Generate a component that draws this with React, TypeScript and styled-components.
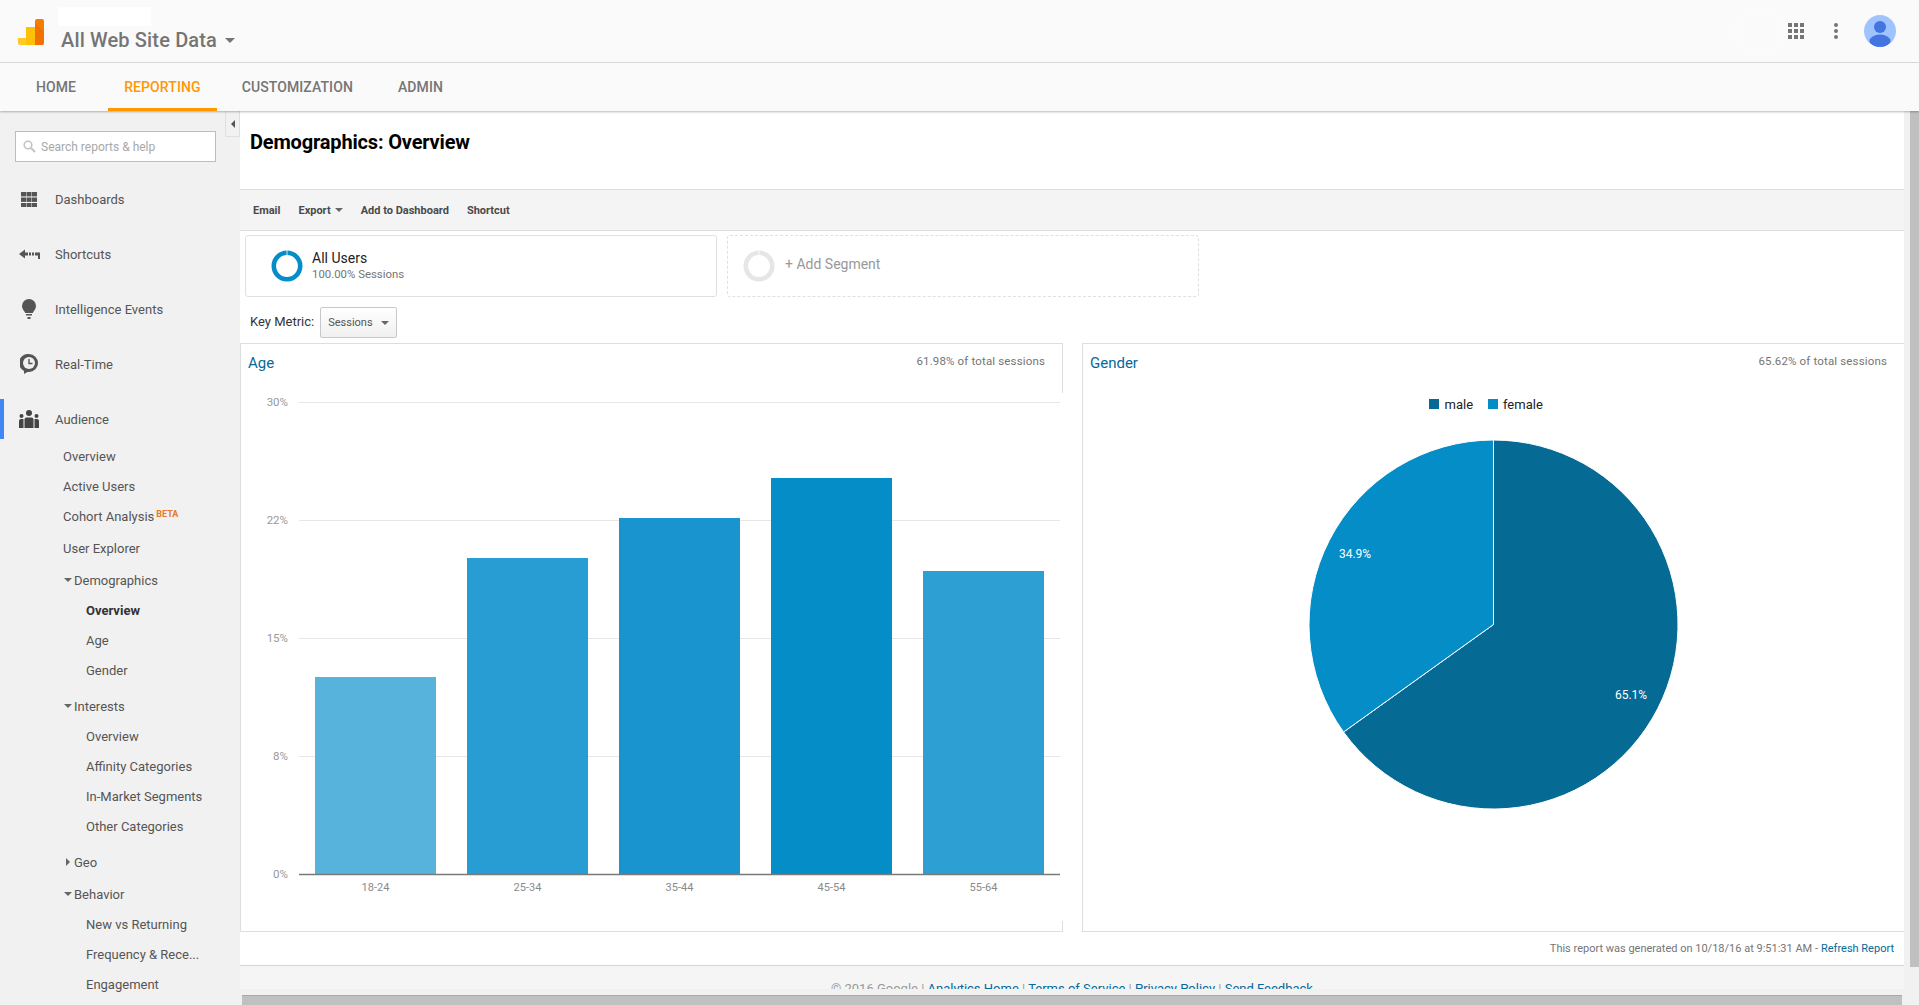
import React from 'react'
import styled, { createGlobalStyle } from 'styled-components'

const GlobalStyle = createGlobalStyle`
  html, body {
    margin: 0;
    padding: 0;
    height: 100%;
    overflow: hidden;
    background: #f1f1f1;
    font-family: Roboto, "Noto Sans", sans-serif;
  }
  * { box-sizing: border-box; }
`

const Page = styled.div`
  width: 1919px;
  height: 1005px;
  display: flex;
  flex-direction: column;
  overflow: hidden;
`

const TopBar = styled.header`
  height: 63px;
  flex: none;
  display: flex;
  align-items: flex-start;
  background: #fafafa;
  border-bottom: 1px solid #dcdcdc;
`

const LogoBox = styled.div`
  width: 58px;
  padding: 19px 0 0 18px;
  flex: none;
`

const ViewBlock = styled.div`
  display: flex;
  flex-direction: column;
  padding-top: 7px;
  flex: 1;
`

const Blank = styled.div`
  width: 93px;
  height: 19px;
  background: #fff;
`

const ViewName = styled.div`
  display: flex;
  align-items: center;
  gap: 8px;
  height: 28px;
  margin-left: 3px;
  font-size: 20px;
  font-weight: 500;
  letter-spacing: 0.15px;
  color: #757575;
`

const Caret = styled.span<{ $color?: string; $size?: number }>`
  display: inline-block;
  width: 0;
  height: 0;
  border-left: ${p => p.$size ?? 4}px solid transparent;
  border-right: ${p => p.$size ?? 4}px solid transparent;
  border-top: ${p => p.$size ?? 4}px solid ${p => p.$color ?? '#757575'};
`

const BigCaret = styled(Caret)`
  margin-top: 1px;
`

const TopIcons = styled.div`
  display: flex;
  align-items: center;
  height: 62px;
  padding-right: 23px;
`

const GhostCircle = styled.div`
  width: 50px;
  height: 44px;
  margin-right: 3px;
  border: 1px solid #fcfcfc;
  border-radius: 50%;
`

const IconSlot = styled.div<{ $gap: number }>`
  display: flex;
  margin-right: ${p => p.$gap}px;
`

const TopNav = styled.nav`
  height: 48px;
  flex: none;
  display: flex;
  background: #fafafa;
  box-shadow: 0 1px 2px rgba(0, 0, 0, 0.28);
  position: relative;
  z-index: 2;
`

const NavItem = styled.div<{ $active?: boolean; $ml: number }>`
  margin-left: ${p => p.$ml}px;
  padding: 2px 16px 0;
  display: flex;
  align-items: center;
  font-size: 14px;
  font-weight: 500;
  letter-spacing: 0.1px;
  color: ${p => (p.$active ? '#ff9800' : '#757575')};
  border-bottom: 3px solid ${p => (p.$active ? '#ff9800' : 'transparent')};
`

const Body = styled.div`
  flex: 1;
  display: flex;
  min-height: 0;
`

const Sidebar = styled.aside`
  width: 240px;
  flex: none;
  background: #f1f1f1;
  position: relative;
  overflow: hidden;
`

const Collapse = styled.div`
  position: absolute;
  top: 0;
  right: 0;
  width: 15px;
  height: 26px;
  display: flex;
  align-items: center;
  justify-content: center;
  background: #f1f1f1;
  border: 1px solid #e0e0e0;
  border-top: none;
`

const LeftTriangle = styled.span`
  width: 0;
  height: 0;
  border-top: 4px solid transparent;
  border-bottom: 4px solid transparent;
  border-right: 4px solid #555;
`

const SearchBox = styled.div`
  width: 201px;
  height: 31px;
  margin: 20px 0 17px 15px;
  display: flex;
  align-items: center;
  gap: 5px;
  padding-left: 7px;
  background: #fff;
  border: 1px solid #bdbdbd;
  font-size: 12px;
  color: #a8a8a8;
`

const MainRow = styled.div<{ $active?: boolean }>`
  height: 40px;
  margin-bottom: 15px;
  display: flex;
  align-items: center;
  border-left: 4px solid ${p => (p.$active ? '#4285f4' : 'transparent')};
  font-size: 13px;
  color: #555;
  &:last-of-type {
    margin-bottom: 2px;
  }
`

const MainIcon = styled.span`
  width: 51px;
  flex: none;
  display: flex;
  justify-content: center;
  padding-right: 1px;
`

const SubRow = styled.div<{ $level: number; $bold?: boolean; $top?: number }>`
  height: 30px;
  margin-top: ${p => p.$top ?? 0}px;
  display: flex;
  align-items: center;
  padding-left: ${p => (p.$level === 1 ? 63 : p.$level === 2 ? 86 : 64)}px;
  font-size: 13px;
  font-weight: ${p => (p.$bold ? 700 : 400)};
  color: ${p => (p.$bold ? '#333' : '#555')};
  white-space: nowrap;
`

const Twisty = styled.span`
  width: 10px;
  flex: none;
  display: flex;
`

const RightTriangle = styled.span`
  width: 0;
  height: 0;
  margin-left: 2px;
  border-top: 4px solid transparent;
  border-bottom: 4px solid transparent;
  border-left: 4px solid #666;
`

const Beta = styled.span`
  font-size: 9px;
  font-weight: 700;
  color: #e8762d;
  margin: 0 0 3px 2px;
  line-height: 1;
`

const ContentColumn = styled.div`
  width: 1664px;
  flex: none;
  display: flex;
  flex-direction: column;
  min-height: 0;
`

const Report = styled.main`
  flex: 1;
  min-height: 0;
  background: #fff;
  display: flex;
  flex-direction: column;
  overflow: hidden;
`

const TitleBar = styled.div`
  height: 79px;
  flex: none;
  padding: 18px 0 0 10px;
  border-bottom: 1px solid #dedede;
`

const Title = styled.h1`
  margin: 0;
  font-size: 20px;
  line-height: 26px;
  font-weight: 700;
  letter-spacing: -0.17px;
  color: #000;
`

const Toolbar = styled.div`
  height: 41px;
  flex: none;
  display: flex;
  align-items: center;
  gap: 18px;
  padding-left: 13px;
  background: #f4f4f4;
  border-bottom: 1px solid #dedede;
`

const ToolItem = styled.span`
  display: flex;
  align-items: center;
  gap: 4px;
  font-size: 11px;
  font-weight: 700;
  color: #4a4a4a;
`

const Segments = styled.div`
  display: flex;
  gap: 10px;
  padding: 4px 0 0 5px;
  flex: none;
`

const SegmentCard = styled.div<{ $dashed?: boolean }>`
  width: 472px;
  height: 62px;
  display: flex;
  align-items: center;
  gap: ${p => (p.$dashed ? 10 : 9)}px;
  padding-left: ${p => (p.$dashed ? 15 : 25)}px;
  border: 1px ${p => (p.$dashed ? 'dashed' : 'solid')} #e0e0e0;
  border-radius: 3px;
`

const SegmentName = styled.div`
  font-size: 14px;
  line-height: 16px;
  color: #222;
`

const SegmentMeta = styled.div`
  font-size: 11.4px;
  line-height: 16px;
  color: #757575;
`

const AddLabel = styled.div`
  font-size: 14px;
  color: #999;
  margin-top: -4px;
`

const MetricRow = styled.div`
  height: 46px;
  flex: none;
  display: flex;
  align-items: flex-start;
  padding: 10px 0 0 10px;
  gap: 6px;
  font-size: 13px;
  color: #333;
`

const MetricLabel = styled.span`
  line-height: 30px;
`

const Select = styled.div`
  width: 77px;
  height: 31px;
  display: flex;
  align-items: center;
  justify-content: space-between;
  padding: 0 7px;
  font-size: 11px;
  color: #555;
  background: linear-gradient(#fff, #f0f0f0);
  border: 1px solid #c8c8c8;
  border-radius: 2px;
`

const Panels = styled.div`
  height: 589px;
  flex: none;
  display: flex;
  gap: 19px;
`

const Panel = styled.section<{ $width: number; $stubs?: boolean }>`
  width: ${p => p.$width}px;
  flex: none;
  position: relative;
  border: 1px solid #dedede;
  border-right: none;
  display: flex;
  flex-direction: column;
  ${p =>
    p.$stubs &&
    `
    &::before, &::after {
      content: '';
      position: absolute;
      right: 0;
      width: 1px;
      background: #dedede;
    }
    &::before { top: 0; height: 49px; }
    &::after { bottom: 0; height: 10px; }
  `}
`

const PanelHead = styled.div<{ $pad: number }>`
  height: 40px;
  flex: none;
  display: flex;
  justify-content: space-between;
  padding: 0 ${p => p.$pad}px 0 7px;
`

const PanelTitle = styled.span`
  font-size: 15px;
  line-height: 38px;
  color: #05699a;
`

const PanelMeta = styled.span`
  font-size: 11.5px;
  line-height: 35px;
  letter-spacing: 0.15px;
  color: #757575;
`

const GeneratedRow = styled.div`
  height: 34px;
  flex: none;
  display: flex;
  align-items: center;
  justify-content: flex-end;
  gap: 3px;
  padding-right: 10px;
  font-size: 11px;
  color: #757575;
  border-bottom: 1px solid #d4d4d4;
`

const Link = styled.a`
  color: #05699a;
  text-decoration: none;
`

const Footer = styled.footer`
  flex: 1;
  min-height: 0;
  overflow: hidden;
  text-align: center;
  background: #f5f5f5;
  padding-top: 15px;
  font-size: 13px;
  line-height: 16px;
  color: #999;
`

const HScrollTrack = styled.div`
  height: 16px;
  flex: none;
  padding: 6px 2px 0 2px;
  background: #f1f1f1;
`

const HScrollThumb = styled.div`
  height: 10px;
  background: #c0c0c0;
  border-top: 1px solid #a9a9a9;
`

const VScrollTrack = styled.div`
  flex: 1;
  background: #f1f1f1;
  padding-left: 6px;
`

const VScrollThumb = styled.div`
  height: 856px;
  background: #c0c0c0;
`

const mainItems = [
  { label: 'Dashboards', icon: <DashboardsIcon /> },
  { label: 'Shortcuts', icon: <ShortcutsIcon /> },
  { label: 'Intelligence Events', icon: <BulbIcon /> },
  { label: 'Real-Time', icon: <ClockIcon /> },
  { label: 'Audience', icon: <PeopleIcon />, active: true },
]

type SubItem = {
  label: string
  level: number
  top?: number
  bold?: boolean
  beta?: boolean
  twisty?: 'down' | 'right'
}

const subItems: SubItem[] = [
  { label: 'Overview', level: 1 },
  { label: 'Active Users', level: 1 },
  { label: 'Cohort Analysis', level: 1, beta: true },
  { label: 'User Explorer', level: 1, top: 2 },
  { label: 'Demographics', level: 0, top: 2, twisty: 'down' },
  { label: 'Overview', level: 2, bold: true },
  { label: 'Age', level: 2 },
  { label: 'Gender', level: 2 },
  { label: 'Interests', level: 0, top: 6, twisty: 'down' },
  { label: 'Overview', level: 2 },
  { label: 'Affinity Categories', level: 2 },
  { label: 'In-Market Segments', level: 2 },
  { label: 'Other Categories', level: 2 },
  { label: 'Geo', level: 0, top: 6, twisty: 'right' },
  { label: 'Behavior', level: 0, top: 2, twisty: 'down' },
  { label: 'New vs Returning', level: 2 },
  { label: 'Frequency & Rece...', level: 2 },
  { label: 'Engagement', level: 2 },
]

const bars = [
  { label: '18-24', x: 315, top: 677, color: '#58b3dc' },
  { label: '25-34', x: 467, top: 558, color: '#279dd3' },
  { label: '35-44', x: 619, top: 518, color: '#1a94cf' },
  { label: '45-54', x: 771, top: 478, color: '#058dc7' },
  { label: '55-64', x: 923, top: 571, color: '#2d9fd3' },
]

const gridLines = [
  { label: '30%', y: 402 },
  { label: '22%', y: 520 },
  { label: '15%', y: 638 },
  { label: '8%', y: 756 },
]

function LogoIcon() {
  return (
    <svg width="26" height="26" viewBox="0 0 26 26">
      <path d="M0 19h8v7H2a2 2 0 0 1-2-2z" fill="#ffca28" />
      <rect x="8" y="8" width="9" height="18" fill="#ffc107" />
      <path d="M17 2a2 2 0 0 1 2-2h5a2 2 0 0 1 2 2v22a2 2 0 0 1-2 2h-7z" fill="#f57c00" />
      <path d="M17 4l9 9v11a2 2 0 0 1-2 2h-7z" fill="#ef6c00" opacity="0.6" />
    </svg>
  )
}

function AppsIcon() {
  const cells = [0, 6, 12]
  return (
    <svg width="16" height="16" viewBox="0 0 16 16" fill="#757575">
      {cells.map(y => cells.map(x => <rect key={`${x}${y}`} x={x} y={y} width="4" height="4" />))}
    </svg>
  )
}

function DotsIcon() {
  return (
    <svg width="4" height="16" viewBox="0 0 4 16" fill="#757575">
      <circle cx="2" cy="2" r="2" />
      <circle cx="2" cy="8" r="2" />
      <circle cx="2" cy="14" r="2" />
    </svg>
  )
}

function AvatarIcon() {
  return (
    <svg width="32" height="32" viewBox="0 0 32 32">
      <defs>
        <clipPath id="avatar-clip">
          <circle cx="16" cy="16" r="16" />
        </clipPath>
      </defs>
      <circle cx="16" cy="16" r="16" fill="#a0c3ff" />
      <g clipPath="url(#avatar-clip)" fill="#4374e0">
        <circle cx="16" cy="12" r="6" />
        <ellipse cx="16" cy="26" rx="10.5" ry="6.5" />
      </g>
    </svg>
  )
}

function SearchIcon() {
  return (
    <svg width="13" height="13" viewBox="0 0 13 13" fill="none" stroke="#c4c4c4">
      <circle cx="5" cy="5" r="3.8" strokeWidth="1.6" />
      <path d="M8 8l4 4" strokeWidth="2.2" />
    </svg>
  )
}

function DashboardsIcon() {
  const cells = [0, 5.5, 11]
  return (
    <svg width="16" height="15" viewBox="0 0 16 15" fill="#555">
      {cells.map(y => cells.map(x => <rect key={`${x}${y}`} x={x} y={y} width="5" height="4.4" />))}
    </svg>
  )
}

function ShortcutsIcon() {
  return (
    <svg width="21" height="10" viewBox="0 0 21 10" fill="#555">
      <path d="M0 5L6 0.500V3.500h3v3H6v3z" />
      <rect x="10" y="3.500" width="2" height="3" />
      <rect x="13" y="3.500" width="2" height="3" />
      <path d="M16 3.500h5V10h-2V6.500h-3z" />
    </svg>
  )
}

function BulbIcon() {
  return (
    <svg width="14" height="20" viewBox="0 0 14 20" fill="#555">
      <path d="M7 0a7 7 0 0 1 7 7c0 3-2 4.500-3.300 7H3.300C2 11.500 0 10 0 7a7 7 0 0 1 7-7z" />
      <rect x="4" y="15" width="6" height="1.500" />
      <rect x="5.500" y="18" width="3" height="2" />
    </svg>
  )
}

function ClockIcon() {
  return (
    <svg width="18" height="20" viewBox="0 0 18 20">
      <path d="M9 0a9 9 0 0 1 0 18H7.500L4 20v-3A9 9 0 0 1 9 0z" fill="#555" />
      <circle cx="9" cy="9" r="6" fill="#f1f1f1" />
      <path d="M9 5v4.500h3.500" fill="none" stroke="#555" strokeWidth="1.400" />
    </svg>
  )
}

function PeopleIcon() {
  return (
    <svg width="20" height="18" viewBox="0 0 20 18" fill="#444">
      <circle cx="10" cy="3" r="3" />
      <circle cx="2.500" cy="6" r="2" />
      <circle cx="17.500" cy="6" r="2" />
      <path d="M5.500 18V9.500a2 2 0 0 1 2-2h5a2 2 0 0 1 2 2V18z" />
      <path d="M0 18v-7a2 2 0 0 1 2-2h2.500v9zM15.500 18V9H18a2 2 0 0 1 2 2v7z" />
    </svg>
  )
}

function Donut({ color }: { color: string }) {
  return (
    <svg width="32" height="32" viewBox="0 0 32 32" fill="none">
      <circle cx="16" cy="16" r="13.200" stroke={color} strokeWidth="4.600" />
      <rect x="15.600" y="0" width="0.800" height="5" fill="#fff" />
    </svg>
  )
}

function AgeChart() {
  return (
    <svg width="822" height="547" viewBox="241 384 822 547">
      {gridLines.map(line => (
        <g key={line.label}>
          <line x1="299" x2="1060" y1={line.y + 0.5} y2={line.y + 0.5} stroke="#e6e6e6" />
          <text x="288" y={line.y + 4} textAnchor="end" fontSize="11.500" fill="#999">
            {line.label}
          </text>
        </g>
      ))}
      {bars.map(bar => (
        <g key={bar.label}>
          <rect x={bar.x} y={bar.top} width="121" height={874 - bar.top} fill={bar.color} />
          <text x={bar.x + 60.5} y="891" textAnchor="middle" fontSize="11" fill="#8a8a8a">
            {bar.label}
          </text>
        </g>
      ))}
      <line x1="299" x2="1060" y1="874.5" y2="874.5" stroke="#7a7a7a" strokeWidth="1.500" />
      <text x="288" y="878" textAnchor="end" fontSize="11.500" fill="#999">
        0%
      </text>
    </svg>
  )
}

function GenderChart() {
  const cx = 1493.5
  const cy = 624.5
  const r = 184.5
  const angle = 0.349 * 2 * Math.PI
  const ex = cx - r * Math.sin(angle)
  const ey = cy - r * Math.cos(angle)
  return (
    <svg width="821" height="547" viewBox="1083 384 821 547">
      <rect x="1429" y="399" width="10" height="10" fill="#056a94" />
      <text x="1444.500" y="408.500" fontSize="13" fill="#222">
        male
      </text>
      <rect x="1488" y="399" width="10" height="10" fill="#058dc7" />
      <text x="1503" y="408.500" fontSize="13" fill="#222">
        female
      </text>
      <path
        d={`M${cx} ${cy}L${cx} ${cy - r}A${r} ${r} 0 1 1 ${ex} ${ey}Z`}
        fill="#056a94"
        stroke="#fff"
      />
      <path
        d={`M${cx} ${cy}L${ex} ${ey}A${r} ${r} 0 0 1 ${cx} ${cy - r}Z`}
        fill="#058dc7"
        stroke="#fff"
      />
      <text x="1631" y="699" textAnchor="middle" fontSize="12" fill="#fff">
        65.1%
      </text>
      <text x="1355" y="558" textAnchor="middle" fontSize="12" fill="#fff">
        34.9%
      </text>
    </svg>
  )
}

const App = () => {
  return (
    <Page>
      <GlobalStyle />
      <TopBar>
        <LogoBox>
          <LogoIcon />
        </LogoBox>
        <ViewBlock>
          <Blank />
          <ViewName>
            All Web Site Data
            <BigCaret $size={5} />
          </ViewName>
        </ViewBlock>
        <TopIcons>
          <GhostCircle />
          <IconSlot $gap={30}>
            <AppsIcon />
          </IconSlot>
          <IconSlot $gap={26}>
            <DotsIcon />
          </IconSlot>
          <AvatarIcon />
        </TopIcons>
      </TopBar>
      <TopNav>
        <NavItem $ml={20}>HOME</NavItem>
        <NavItem $ml={16} $active>
          REPORTING
        </NavItem>
        <NavItem $ml={9}>CUSTOMIZATION</NavItem>
        <NavItem $ml={13}>ADMIN</NavItem>
      </TopNav>
      <Body>
        <Sidebar>
          <Collapse>
            <LeftTriangle />
          </Collapse>
          <SearchBox>
            <SearchIcon />
            Search reports &amp; help
          </SearchBox>
          <div>
            {mainItems.map(item => (
              <MainRow key={item.label} $active={item.active}>
                <MainIcon>{item.icon}</MainIcon>
                {item.label}
              </MainRow>
            ))}
          </div>
          {subItems.map((item, index) => (
            <SubRow key={index} $level={item.level} $bold={item.bold} $top={item.top}>
              {item.twisty && (
                <Twisty>{item.twisty === 'down' ? <Caret $color="#666" /> : <RightTriangle />}</Twisty>
              )}
              {item.label}
              {item.beta && <Beta>BETA</Beta>}
            </SubRow>
          ))}
        </Sidebar>
        <ContentColumn>
          <Report>
            <TitleBar>
              <Title>Demographics: Overview</Title>
            </TitleBar>
            <Toolbar>
              <ToolItem>Email</ToolItem>
              <ToolItem>
                Export <Caret $color="#666" />
              </ToolItem>
              <ToolItem>Add to Dashboard</ToolItem>
              <ToolItem>Shortcut</ToolItem>
            </Toolbar>
            <Segments>
              <SegmentCard>
                <Donut color="#058dc7" />
                <div>
                  <SegmentName>All Users</SegmentName>
                  <SegmentMeta>100.00% Sessions</SegmentMeta>
                </div>
              </SegmentCard>
              <SegmentCard $dashed>
                <Donut color="#e6e6e6" />
                <AddLabel>+ Add Segment</AddLabel>
              </SegmentCard>
            </Segments>
            <MetricRow>
              <MetricLabel>Key Metric:</MetricLabel>
              <Select>
                Sessions
                <Caret $color="#666" />
              </Select>
            </MetricRow>
            <Panels>
              <Panel $width={823} $stubs>
                <PanelHead $pad={18}>
                  <PanelTitle>Age</PanelTitle>
                  <PanelMeta>61.98% of total sessions</PanelMeta>
                </PanelHead>
                <AgeChart />
              </Panel>
              <Panel $width={822}>
                <PanelHead $pad={17}>
                  <PanelTitle>Gender</PanelTitle>
                  <PanelMeta>65.62% of total sessions</PanelMeta>
                </PanelHead>
                <GenderChart />
              </Panel>
            </Panels>
            <GeneratedRow>
              This report was generated on 10/18/16 at 9:51:31 AM -<Link>Refresh Report</Link>
            </GeneratedRow>
            <Footer>
              © 2016 Google | <Link>Analytics Home</Link> | <Link>Terms of Service</Link> |{' '}
              <Link>Privacy Policy</Link> | <Link>Send Feedback</Link>
            </Footer>
          </Report>
          <HScrollTrack>
            <HScrollThumb />
          </HScrollTrack>
        </ContentColumn>
        <VScrollTrack>
          <VScrollThumb />
        </VScrollTrack>
      </Body>
    </Page>
  )
}

export default App
